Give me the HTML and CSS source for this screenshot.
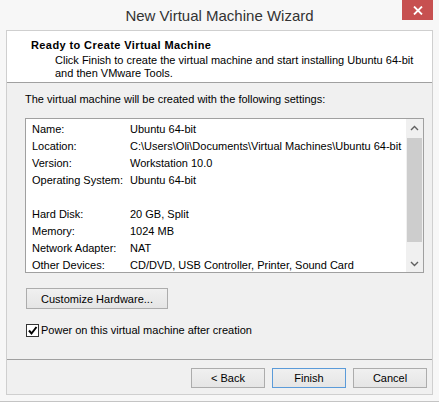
FILE: index.html
```html
<!DOCTYPE html>
<html>
<head>
<meta charset="utf-8">
<link rel="stylesheet" href="styles.css">
</head>
<body>
<div class="window">
  <div class="titlebar">
    <span class="title">New Virtual Machine Wizard</span>
    <div class="close">
      <svg width="10" height="9" viewBox="0 0 10 9"><path d="M1 0.5 L9 8.5 M9 0.5 L1 8.5" stroke="#fff" stroke-width="1.8"/></svg>
    </div>
  </div>
  <div class="client">
    <div class="header">
      <div class="h-title">Ready to Create Virtual Machine</div>
      <div class="h-sub">Click Finish to create the virtual machine and start installing Ubuntu 64-bit<br>and then VMware Tools.</div>
    </div>
    <div class="body">
      <p class="intro">The virtual machine will be created with the following settings:</p>
      <div class="listbox">
        <div class="rows">
          <div class="row"><span class="lbl">Name:</span><span>Ubuntu 64-bit</span></div>
          <div class="row"><span class="lbl">Location:</span><span>C:\Users\Oli\Documents\Virtual Machines\Ubuntu 64-bit</span></div>
          <div class="row"><span class="lbl">Version:</span><span>Workstation 10.0</span></div>
          <div class="row"><span class="lbl">Operating System:</span><span>Ubuntu 64-bit</span></div>
          <div class="row"></div>
          <div class="row"><span class="lbl">Hard Disk:</span><span>20 GB, Split</span></div>
          <div class="row"><span class="lbl">Memory:</span><span>1024 MB</span></div>
          <div class="row"><span class="lbl">Network Adapter:</span><span>NAT</span></div>
          <div class="row"><span class="lbl">Other Devices:</span><span>CD/DVD, USB Controller, Printer, Sound Card</span></div>
        </div>
        <div class="scrollbar">
          <div class="arrow">
            <svg width="9" height="6" viewBox="0 0 9 6"><path d="M1 5 L4.5 1.5 L8 5" fill="none" stroke="#606060" stroke-width="1.4"/></svg>
          </div>
          <div class="track"><div class="thumb"></div></div>
          <div class="arrow">
            <svg width="9" height="6" viewBox="0 0 9 6"><path d="M1 1 L4.5 4.5 L8 1" fill="none" stroke="#606060" stroke-width="1.4"/></svg>
          </div>
        </div>
      </div>
      <button class="btn custom">Customize Hardware...</button>
      <label class="check">
        <span class="box"><svg width="11" height="11" viewBox="0 0 11 11"><path d="M2 5.5 L4.5 8.5 L9.5 2" fill="none" stroke="#000" stroke-width="2"/></svg></span>
        <span>Power on this virtual machine after creation</span>
      </label>
    </div>
    <div class="footer">
      <button class="btn">&lt; Back</button>
      <button class="btn default">Finish</button>
      <button class="btn">Cancel</button>
    </div>
  </div>
</div>
</body>
</html>
```

FILE: styles.css
```css
* { box-sizing: border-box; }
html, body { margin: 0; padding: 0; background: #ffffff; }
body {
  font-family: "Liberation Sans", Arial, sans-serif;
  font-size: 11px;
  color: #000;
}
.window {
  width: 439px;
  height: 402px;
  background: #f7f7f7;
  border-bottom: 1px solid #c4c4c4;
  display: flex;
  flex-direction: column;
}
.titlebar {
  position: relative;
  height: 30px;
  display: flex;
  align-items: center;
  justify-content: center;
}
.title {
  font-size: 15px;
  color: #333333;
  margin-top: 1px;
}
.close {
  position: absolute;
  top: 0;
  right: 6px;
  width: 31px;
  height: 20px;
  background: #c75050;
  display: flex;
  align-items: center;
  justify-content: center;
}
.client {
  margin: 0 6px;
  height: 365px;
  border: 1px solid #cfcfcf;
  display: flex;
  flex-direction: column;
  background: #f0f0f0;
}
.header {
  height: 52px;
  background: #ffffff;
  border-bottom: 1px solid #a0a0a0;
  padding: 7px 0 0 24px;
}
.h-title {
  font-weight: bold;
  letter-spacing: 0.4px;
  line-height: 14px;
}
.h-sub {
  margin-left: 24px;
  margin-top: 2px;
  line-height: 13px;
}
.body {
  flex: 1;
  padding: 10px 0 0 18px;
}
.intro {
  margin: 0;
  line-height: 13px;
}
.listbox {
  margin-top: 12px;
  width: 399px;
  height: 155px;
  border: 1px solid #a0a0a0;
  background: #ffffff;
  display: flex;
  overflow: hidden;
}
.rows {
  flex: 1;
  padding: 2px 0 0 6px;
  overflow: hidden;
}
.row {
  height: 17px;
  line-height: 17px;
  display: flex;
  white-space: nowrap;
}
.lbl {
  width: 98px;
  flex: none;
}
.scrollbar {
  width: 17px;
  background: #f0f0f0;
  display: flex;
  flex-direction: column;
}
.arrow {
  height: 17px;
  display: flex;
  align-items: center;
  justify-content: center;
}
.track {
  flex: 1;
  padding: 2px 0 0 0;
}
.thumb {
  margin: 0 1px;
  height: 104px;
  background: #cdcdcd;
}
.btn {
  font-family: "Liberation Sans", Arial, sans-serif;
  font-size: 11px;
  color: #000;
  height: 21px;
  border: 1px solid #acacac;
  background: linear-gradient(#f0f0f0, #e5e5e5);
  padding: 0;
}
.custom {
  display: block;
  margin: 15px 0 0 1px;
  width: 142px;
}
.check {
  display: flex;
  align-items: center;
  margin: 15px 0 0 1px;
  line-height: 13px;
}
.box {
  width: 13px;
  height: 13px;
  border: 1px solid #333333;
  background: #ffffff;
  display: flex;
  align-items: center;
  justify-content: center;
  margin-right: 2px;
}
.footer {
  height: 35px;
  border-top: 1px solid #a0a0a0;
  display: flex;
  justify-content: flex-end;
  gap: 7px;
  padding: 8px 5px 0 0;
}
.footer .btn {
  width: 74px;
  height: 20px;
}
.footer .default {
  border-color: #5b9bd9;
  background: linear-gradient(#f0f0f0, #e5e5e5);
}
```
